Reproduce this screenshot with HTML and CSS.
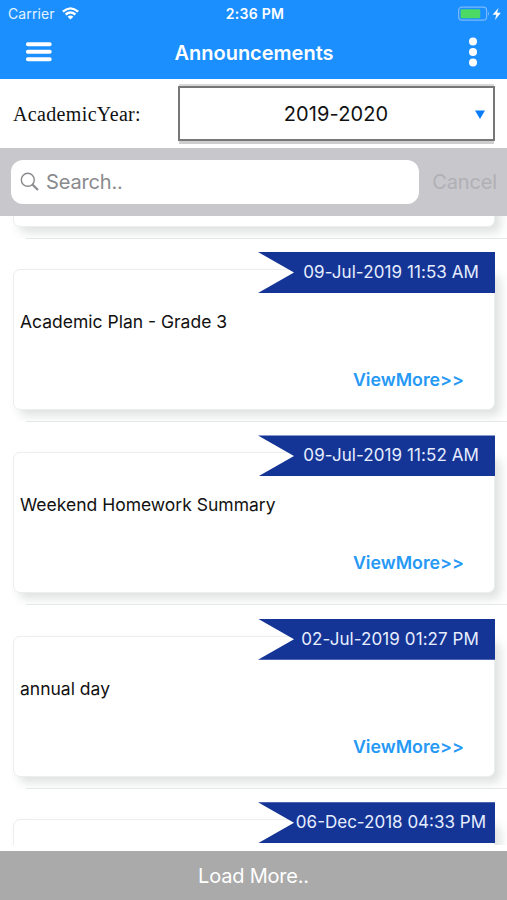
FILE: index.html
```html
<!DOCTYPE html>
<html lang="en">
<head>
<meta charset="utf-8">
<title>Announcements</title>
<link rel="stylesheet" href="styles.css">
</head>
<body>
<div class="app">
  <header class="header">
    <div class="status">
      <div class="carrier"><span>Carrier</span>
        <svg class="wifi" width="17" height="13" viewBox="0 0 17 13" fill="none" stroke="#fff" stroke-width="2.3"><path d="M.9 4.6Q8.5-1.8 16.1 4.6M3.6 7.5Q8.5 3.4 13.4 7.5"/><path d="M5.6 9.8Q8.5 7.3 11.4 9.8L8.5 12.6Z" fill="#fff" stroke="none"/></svg>
      </div>
      <span class="clock">2:36 PM</span>
      <div class="power">
        <svg width="44" height="16" viewBox="0 0 44 16"><rect x=".6" y="1.2" width="28" height="13" rx="3.2" fill="none" stroke="#79b9fb" stroke-width="1.2"/><rect x="2.6" y="3.3" width="19.6" height="8.9" rx="1.2" fill="#4cd964"/><path d="M30 5.6Q32 7.7 30 9.8Z" fill="#79b9fb"/><path d="M40.4 2L34.6 8.7H38.3L37 14L42.8 6.8H39.2Z" fill="#fff"/></svg>
      </div>
    </div>
    <div class="navbar">
      <svg class="burger" width="28" height="22" viewBox="0 0 28 22" stroke="#fff" stroke-width="4" stroke-linecap="round"><path d="M2.9 3.2H24.7M2.9 10.7H24.7M2.9 18.2H24.7"/></svg>
      <h1>Announcements</h1>
      <svg class="dots" width="10" height="30" viewBox="0 0 10 30" fill="#fff"><circle cx="5" cy="4.5" r="4"/><circle cx="5" cy="15" r="4"/><circle cx="5" cy="25.5" r="4"/></svg>
    </div>
  </header>
  <section class="year">
    <label>AcademicYear:</label>
    <div class="select"><span>2019-2020</span><svg width="10" height="9" viewBox="0 0 10 9"><path d="M0 .5H10L5 9Z" fill="#087df5"/></svg></div>
  </section>
  <section class="searchbar">
    <div class="field"><svg width="20" height="20" viewBox="0 0 20 20" fill="none" stroke="#8a8a8e"><circle cx="7.8" cy="7.8" r="6.5" stroke-width="1.4"/><path d="M12.4 12.4L18 18" stroke-width="2.1"/></svg><span>Search..</span></div>
    <span class="cancel">Cancel</span>
  </section>
  <main class="list">
    <div class="cell tail"><article class="card"></article></div>
    <div class="cell"><article class="card"><time class="ribbon">09-Jul-2019 11:53 AM</time><h2>Academic Plan - Grade 3</h2><a class="more">ViewMore&gt;&gt;</a></article></div>
    <div class="cell"><article class="card"><time class="ribbon">09-Jul-2019 11:52 AM</time><h2>Weekend Homework Summary</h2><a class="more">ViewMore&gt;&gt;</a></article></div>
    <div class="cell"><article class="card"><time class="ribbon">02-Jul-2019 01:27 PM</time><h2>annual day</h2><a class="more">ViewMore&gt;&gt;</a></article></div>
    <div class="cell"><article class="card"><time class="ribbon wide">06-Dec-2018 04:33 PM</time></article></div>
  </main>
  <footer class="load">Load More..</footer>
</div>
</body>
</html>
```
FILE: styles.css
```css
* { box-sizing: border-box; }
body { margin: 0; font-family: Inter, "Liberation Sans", sans-serif; color: #111; background: #fff; }
h1, h2 { margin: 0; }
.app { width: 507px; height: 900px; display: flex; flex-direction: column; overflow: hidden; }
.header { height: 79px; flex: none; background: #1c8fff; color: #fff; }
.status { height: 27px; display: grid; grid-template-columns: 1fr auto 1fr; align-items: center; padding: 0 5px 0 8px; }
.carrier { display: flex; align-items: center; gap: 7px; font-size: 14px; letter-spacing: .1px; color: #e2f3ff; }
.wifi { margin-top: -1px; }
.clock { font-size: 14px; font-weight: 600; letter-spacing: .3px; }
.power { display: flex; justify-content: flex-end; }
.navbar { height: 50px; display: grid; grid-template-columns: 28px 1fr 10px; align-items: center; padding: 0 29px 0 25px; }
.navbar h1 { padding-right: 13px; text-align: center; font-size: 20px; font-weight: 600; line-height: 26px; padding-top: 1px; }
.year { height: 68.5px; flex: none; display: flex; align-items: flex-start; justify-content: space-between; padding: 7px 12px 0 13px; }
.year label { font: 20px/56px "Liberation Serif", serif; letter-spacing: .35px; }
.select { width: 317px; height: 55px; border: 2px solid #777; box-shadow: 0 4px 0 -1px #cecece, 0 -3px 0 -1px #d8d8d8; display: flex; align-items: center; padding: 1px 8px 0 17px; font-size: 20px; letter-spacing: .12px; }
.select span { flex: 1; text-align: center; }
.searchbar { height: 68.5px; flex: none; background: #c8c7cc; display: flex; align-items: center; padding: 0 10px 0 11px; justify-content: space-between; font-size: 20px; letter-spacing: -.15px; }
.field { width: 408px; height: 44px; border-radius: 12px; background: #fff; display: flex; align-items: center; gap: 6px; padding-left: 9px; color: #8a8a8e; }
.cancel { color: #b1b0b5; }
.list { height: 629px; flex: none; overflow: hidden; }
.cell { height: 183.4px; padding: 30.5px 12px 0 13px; background: linear-gradient(#e8e9e9, #e8e9e9) 26px 100% / 100% 1px no-repeat; overflow: hidden; }
.tail { height: 22.5px; padding-top: 0; }
.card { position: relative; height: 141px; border: 1px solid #eceeee; border-radius: 7px; background: #fff; box-shadow: 6px 6px 10px rgba(60, 80, 80, .16); display: flex; flex-direction: column; padding: 42px 30px 19px 6px; }
.tail .card { height: 110px; margin-top: -99.5px; }
.ribbon { position: absolute; top: -18px; right: -1px; width: 237px; height: 41px; padding-right: 16px; background: #143596; clip-path: polygon(0 0, 100% 0, 100% 100%, 0 100%, 36px 50%); color: #e6edff; font-size: 17px; letter-spacing: .08px; line-height: 41px; text-align: right; white-space: nowrap; }
.wide { padding-right: 9px; letter-spacing: 0; }
.card h2 { font-size: 17.5px; font-weight: 400; line-height: 20px; }
.more { margin-top: auto; align-self: flex-end; font-size: 17.8px; font-weight: 580; line-height: 20px; color: #2699f5; }
.load { margin-top: auto; height: 49px; flex: none; background: #aaa; color: #fff; text-align: center; font-size: 20px; line-height: 51px; letter-spacing: -.2px; }
```
